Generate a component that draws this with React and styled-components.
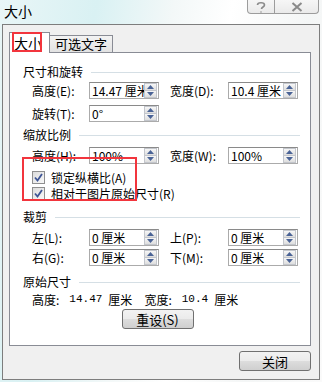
import React from "react";
import styled, { createGlobalStyle } from "styled-components";

const GlobalStyle = createGlobalStyle`
  html, body {
    margin: 0;
    padding: 0;
  }
  body {
    font-family: "Noto Sans CJK SC", "DejaVu Sans", sans-serif;
    font-size: 12px;
    color: #000;
  }
`;

function Spinner() {
  return (
    <SpinBox>
      <SpinHalf>
        <svg width="7" height="4" viewBox="0 0 7 4">
          <path d="M0 4 L3.5 0 L7 4 Z" fill="#4a6396" />
        </svg>
      </SpinHalf>
      <SpinHalf $bottom>
        <svg width="7" height="4" viewBox="0 0 7 4">
          <path d="M0 0 L3.5 4 L7 0 Z" fill="#4a6396" />
        </svg>
      </SpinHalf>
    </SpinBox>
  );
}

function Field({ label, value, second }) {
  return (
    <FieldWrap $second={second}>
      <Label $second={second}>{label}</Label>
      <Input>
        <InputText>{value}</InputText>
        <Spinner />
      </Input>
    </FieldWrap>
  );
}

function Check({ children, top }) {
  return (
    <CheckRow $top={top}>
      <CheckBox>
        <svg width="9" height="9" viewBox="0 0 9 9">
          <path d="M1 4.5 L3.5 7.5 L8 1" fill="none" stroke="#3e5595" strokeWidth="1.8" />
        </svg>
      </CheckBox>
      <span>{children}</span>
    </CheckRow>
  );
}

export default function App() {
  return (
    <>
      <GlobalStyle />
      <Window>
        <TitleBar>
          <Title>大小</Title>
          <Caption>
            <CapButton $w={28}>
              <svg width="10" height="12" viewBox="0 0 10 12">
                <path
                  d="M1.5 4 C1.5 1 8.5 1 8.5 4 C8.5 6 5.5 6 5.5 8 M5 10.5 L5 11.5"
                  fill="none"
                  stroke="#8a8a8a"
                  strokeWidth="1.6"
                />
              </svg>
            </CapButton>
            <CapButton $w={44} $last>
              <svg width="12" height="10" viewBox="0 0 12 10">
                <path d="M1.5 1 L10.5 9 M10.5 1 L1.5 9" fill="none" stroke="#8a8a8a" strokeWidth="2" />
              </svg>
            </CapButton>
          </Caption>
        </TitleBar>
        <Client>
          <Tabs>
            <Tab $active>大小</Tab>
            <Tab>可选文字</Tab>
            <Marker $x={3} $y={0} $w={30} $h={20} />
          </Tabs>
          <Panel>
            <Heading>尺寸和旋转</Heading>
            <Row $mt={3}>
              <Field label="高度(E):" value="14.47 厘米" />
              <Field label="宽度(D):" value="10.4 厘米" second />
            </Row>
            <Row $mt={6}>
              <Field label="旋转(T):" value="0°" />
            </Row>
            <Heading $mt={6}>缩放比例</Heading>
            <Row $mt={5}>
              <Field label="高度(H):" value="100%" />
              <Field label="宽度(W):" value="100%" second />
            </Row>
            <Check top={6}>锁定纵横比(A)</Check>
            <Check top={2}>相对于图片原始尺寸(R)</Check>
            <Heading $mt={10}>裁剪</Heading>
            <Row $mt={5}>
              <Field label="左(L):" value="0 厘米" />
              <Field label="上(P):" value="0 厘米" second />
            </Row>
            <Row $mt={3}>
              <Field label="右(G):" value="0 厘米" />
              <Field label="下(M):" value="0 厘米" second />
            </Row>
            <Heading $mt={9}>原始尺寸</Heading>
            <Original>
              <span>高度:</span>
              <Num>14.47</Num>
              <span>厘米</span>
              <Gap />
              <span>宽度:</span>
              <Num>10.4</Num>
              <span>厘米</span>
            </Original>
            <Center>
              <Button>重设(S)</Button>
            </Center>
            <Marker $x={12} $y={104} $w={115} $h={44} />
          </Panel>
          <Footer>
            <Button>关闭</Button>
          </Footer>
        </Client>
      </Window>
    </>
  );
}

const Window = styled.div`
  width: 322px;
  height: 382px;
  display: flex;
  flex-direction: column;
  box-sizing: border-box;
  padding: 0 2px 2px 2px;
  background: linear-gradient(100deg, #e9f6f7 0%, #d9f1f3 25%, #f3f8f8 45%, #ffffff 60%, #f4f6f6 80%, #fafafa 100%);
`;

const TitleBar = styled.div`
  height: 24px;
  display: flex;
  justify-content: space-between;
  align-items: flex-start;
`;

const Title = styled.div`
  font-size: 14px;
  line-height: 14px;
  padding: 4px 0 0 2px;
`;

const Caption = styled.div`
  display: flex;
  margin-right: 1px;
`;

const CapButton = styled.div`
  width: ${({ $w }) => $w}px;
  height: 14px;
  box-sizing: border-box;
  display: flex;
  align-items: center;
  justify-content: center;
  border: 1px solid #9c9c9c;
  border-top: none;
  border-left: ${({ $last }) => ($last ? "none" : "1px solid #9c9c9c")};
  border-radius: ${({ $last }) => ($last ? "0 0 4px 0" : "0 0 0 4px")};
  background: linear-gradient(#f6f6f6, #eaeaea);
`;

const Client = styled.div`
  flex: 1;
  position: relative;
  display: flex;
  flex-direction: column;
  border: 1px solid #7d7d7d;
  background: #f0f0f0;
  padding: 7px 7px 7px 6px;
`;

const Tabs = styled.div`
  position: relative;
  display: flex;
  align-items: flex-end;
  height: 20px;
`;

const Tab = styled.div`
  box-sizing: border-box;
  height: ${({ $active }) => ($active ? 21 : 17)}px;
  margin-bottom: ${({ $active }) => ($active ? -1 : 0)}px;
  padding: ${({ $active }) => ($active ? "2px 7px 0 4px" : "0 5px 0 5px")};
  line-height: 16px;
  font-size: ${({ $active }) => ($active ? 14 : 13)}px;
  border: 1px solid #898c95;
  border-bottom: none;
  border-left: ${({ $active }) => ($active ? "1px solid #898c95" : "none")};
  background: ${({ $active }) => ($active ? "#fff" : "linear-gradient(#f3f3f3, #e2e2e2)")};
  position: relative;
  z-index: ${({ $active }) => ($active ? 2 : 1)};
`;

const Marker = styled.div`
  position: absolute;
  left: ${({ $x }) => $x}px;
  top: ${({ $y }) => $y}px;
  width: ${({ $w }) => $w}px;
  height: ${({ $h }) => $h}px;
  box-sizing: border-box;
  border: 2px solid #f2353d;
  z-index: 5;
  pointer-events: none;
`;

const Panel = styled.div`
  position: relative;
  width: 302px;
  height: 294px;
  box-sizing: border-box;
  border: 1px solid #898c95;
  background: #fff;
  padding: 12px 10px 0 13px;
`;

const Heading = styled.div`
  display: flex;
  align-items: center;
  height: 14px;
  line-height: 14px;
  margin-top: ${({ $mt }) => $mt || 0}px;

  &::after {
    content: "";
    flex: 1;
    height: 1px;
    margin-left: 8px;
    background: #d5dfe5;
  }
`;

const Row = styled.div`
  display: flex;
  margin-top: ${({ $mt }) => $mt}px;
  padding-left: 9px;
`;

const FieldWrap = styled.div`
  display: flex;
  align-items: center;
  margin-left: ${({ $second }) => ($second ? 11 : 0)}px;
`;

const Label = styled.div`
  width: ${({ $second }) => ($second ? 58 : 57)}px;
`;

const Input = styled.div`
  width: 70px;
  height: 17px;
  box-sizing: border-box;
  display: flex;
  align-items: center;
  border: 1px solid #ababab;
  border-top-color: #8a8a8a;
  background: #fff;
  padding: 0 1px 0 2px;
`;

const InputText = styled.div`
  flex: 1;
  min-width: 0;
  overflow: hidden;
  white-space: nowrap;
  line-height: 15px;
  font-size: 12px;
`;

const SpinBox = styled.div`
  width: 13px;
  height: 15px;
  flex-shrink: 0;
  display: flex;
  flex-direction: column;
`;

const SpinHalf = styled.div`
  flex: 1;
  display: flex;
  align-items: center;
  justify-content: center;
  box-sizing: border-box;
  border: 1px solid #c3c6cc;
  border-top: ${({ $bottom }) => ($bottom ? "none" : "1px solid #c3c6cc")};
  background: linear-gradient(#f7f7f7, #dedede);
`;

const CheckRow = styled.div`
  display: flex;
  align-items: center;
  height: 14px;
  margin-top: ${({ $top }) => $top}px;
  padding-left: 9px;
  gap: 6px;
`;

const CheckBox = styled.div`
  width: 13px;
  height: 13px;
  box-sizing: border-box;
  border: 1px solid #8f8f8f;
  background: linear-gradient(135deg, #dcdcdc, #f8f8f8);
  display: flex;
  align-items: center;
  justify-content: center;
`;

const Original = styled.div`
  display: flex;
  align-items: center;
  height: 14px;
  margin-top: 3px;
  padding-left: 9px;
  gap: 4px;
`;

const Num = styled.span`
  font-family: "Liberation Mono", monospace;
  font-size: 11px;
  margin: 0 2px 0 6px;
`;

const Gap = styled.span`
  width: 4px;
`;

const Center = styled.div`
  display: flex;
  justify-content: center;
  margin-top: 3px;
  padding-right: 8px;
`;

const Button = styled.div`
  width: 72px;
  height: 20px;
  box-sizing: border-box;
  display: flex;
  align-items: center;
  justify-content: center;
  border: 1px solid #707070;
  border-radius: 3px;
  font-size: 13px;
  background: linear-gradient(#f2f2f2 0%, #ebebeb 50%, #dddddd 51%, #cfcfcf 100%);
`;

const Footer = styled.div`
  display: flex;
  justify-content: flex-end;
  margin-top: 5px;
  padding-right: 1px;
`;
